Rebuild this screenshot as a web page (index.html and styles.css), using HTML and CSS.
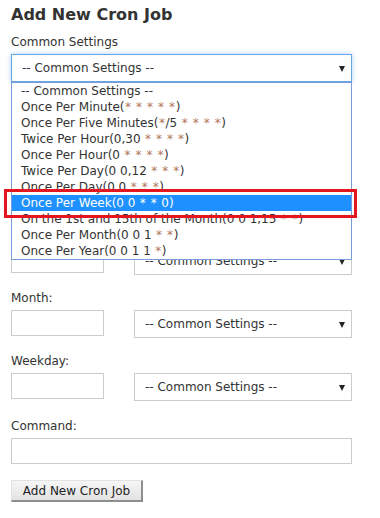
FILE: index.html
```html
<!DOCTYPE html>
<html lang="en">
<head>
  <meta charset="utf-8">
  <meta name="viewport" content="width=device-width, initial-scale=1" />
  <title>Add New Cron Job</title>
  <link rel="stylesheet" href="styles.css">
</head>
<body>
  <div id="container">
    <h1>Add New Cron Job</h1>

    <div class="field common">
      <label>Common Settings</label>
      <div class="select-wrap wide open">
        <select class="focused">
          <option>-- Common Settings --</option>
        </select>
        <ul class="options">
          <li>-- Common Settings --</li>
          <li>Once Per Minute(<i>*</i> <i>*</i> <i>*</i> <i>*</i> <i>*</i>)</li>
          <li>Once Per Five Minutes(<i>*</i>/5 <i>*</i> <i>*</i> <i>*</i> <i>*</i>)</li>
          <li>Twice Per Hour(0,30 <i>*</i> <i>*</i> <i>*</i> <i>*</i>)</li>
          <li>Once Per Hour(0 <i>*</i> <i>*</i> <i>*</i> <i>*</i>)</li>
          <li>Twice Per Day(0 0,12 <i>*</i> <i>*</i> <i>*</i>)</li>
          <li>Once Per Day(0 0 <i>*</i> <i>*</i> <i>*</i>)</li>
          <li class="selected">Once Per Week(0 0 <i>*</i> <i>*</i> 0)</li>
          <li>On the 1st and 15th of the Month(0 0 1,15 <i>*</i> <i>*</i>)</li>
          <li>Once Per Month(0 0 1 <i>*</i> <i>*</i>)</li>
          <li>Once Per Year(0 0 1 1 <i>*</i>)</li>
        </ul>
      </div>
    </div>

    <!-- these rows sit under the open list -->
    <div class="field first under">
      <label>Minute:</label>
      <div class="row">
        <input type="text" class="text short">
        <div class="select-wrap"><select><option>-- Common Settings --</option></select></div>
      </div>
    </div>

    <div class="field under">
      <label>Hour:</label>
      <div class="row">
        <input type="text" class="text short">
        <div class="select-wrap"><select><option>-- Common Settings --</option></select></div>
      </div>
    </div>

    <div class="field">
      <label class="under">Day:</label>
      <div class="row">
        <input type="text" class="text short">
        <div class="select-wrap"><select><option>-- Common Settings --</option></select></div>
      </div>
    </div>

    <div class="field">
      <label>Month:</label>
      <div class="row">
        <input type="text" class="text short">
        <div class="select-wrap"><select><option>-- Common Settings --</option></select></div>
      </div>
    </div>

    <div class="field">
      <label>Weekday:</label>
      <div class="row">
        <input type="text" class="text short">
        <div class="select-wrap"><select><option>-- Common Settings --</option></select></div>
      </div>
    </div>

    <div class="field command">
      <label>Command:</label>
      <input type="text" class="text long">
    </div>

    <button class="submit">Add New Cron Job</button>
  </div>
</body>
</html>
```

FILE: styles.css
```css
body {
  margin: 0;
  font-family: "DejaVu Sans", Verdana, sans-serif;
  font-size: 12px;
  color: #333;
  background: #fff;
}
#container {
  width: 341px;
  padding: 5px 11px 0;
}
h1 {
  font-size: 16px;
  line-height: 20px;
  margin: 0 0 9px;
}
.field {
  margin-top: 15px;
}
.field.common {
  margin-top: 0;
}
.field.first {
  margin-top: 19px;
}
.field.command {
  margin-top: 17px;
}
.field label {
  display: block;
  line-height: 16px;
  margin-bottom: 4px;
}
.under {
  visibility: hidden;
}
.row {
  display: flex;
  align-items: flex-start;
  gap: 30px;
}
input.text {
  box-sizing: border-box;
  height: 26px;
  border: 1px solid #ccc;
  margin: 0;
  padding: 0 6px;
}
input.short { width: 93px; }
input.long { width: 341px; display: block; }

.select-wrap {
  position: relative;
  width: 218px;
}
.select-wrap.wide {
  width: 341px;
}
.select-wrap::after {
  content: "";
  position: absolute;
  right: 7px;
  top: 12px;
  border-left: 3.5px solid transparent;
  border-right: 3.5px solid transparent;
  border-top: 6px solid #222;
  pointer-events: none;
}
.select-wrap select {
  appearance: none;
  -webkit-appearance: none;
  box-sizing: border-box;
  display: block;
  width: 100%;
  height: 28px;
  margin: 0;
  padding: 0 10px;
  font: inherit;
  color: #333;
  background: #fff;
  border: 1px solid #ccc;
  border-radius: 0;
}
.select-wrap select.focused {
  border-color: #6aa6e4;
  box-shadow: 0 0 5px rgba(102, 170, 235, 0.55);
  outline: none;
}

/* open dropdown list */
.options {
  position: absolute;
  top: 28px;
  left: 0;
  right: 0;
  z-index: 2;
  margin: 0;
  padding: 0;
  list-style: none;
  background: #fff;
  border: 1px solid #7a9cd6;
}
.options li {
  height: 16px;
  line-height: 16px;
  padding-left: 9px;
  white-space: nowrap;
}
.options i {
  font-style: normal;
  color: #b0785a;
  padding: 0 0.6px;
}
.options li.selected {
  position: relative;
  background: #1e90ff;
  color: #fff;
}
.options li.selected i {
  color: #fff;
}
.options li.selected::after {
  content: "";
  position: absolute;
  left: -8px;
  right: -6px;
  top: -6px;
  bottom: -7px;
  border: 3px solid #e4161f;
}

.submit {
  display: block;
  box-sizing: border-box;
  margin-top: 16px;
  width: 132px;
  height: 22px;
  padding: 0;
  font: inherit;
  color: #222;
  background: linear-gradient(#f6f6f6, #e3e3e3);
  border-top: 1px solid #e2e2e2;
  border-left: 1px solid #e2e2e2;
  border-right: 2px solid #8e8e8e;
  border-bottom: 2px solid #8e8e8e;
}
```
